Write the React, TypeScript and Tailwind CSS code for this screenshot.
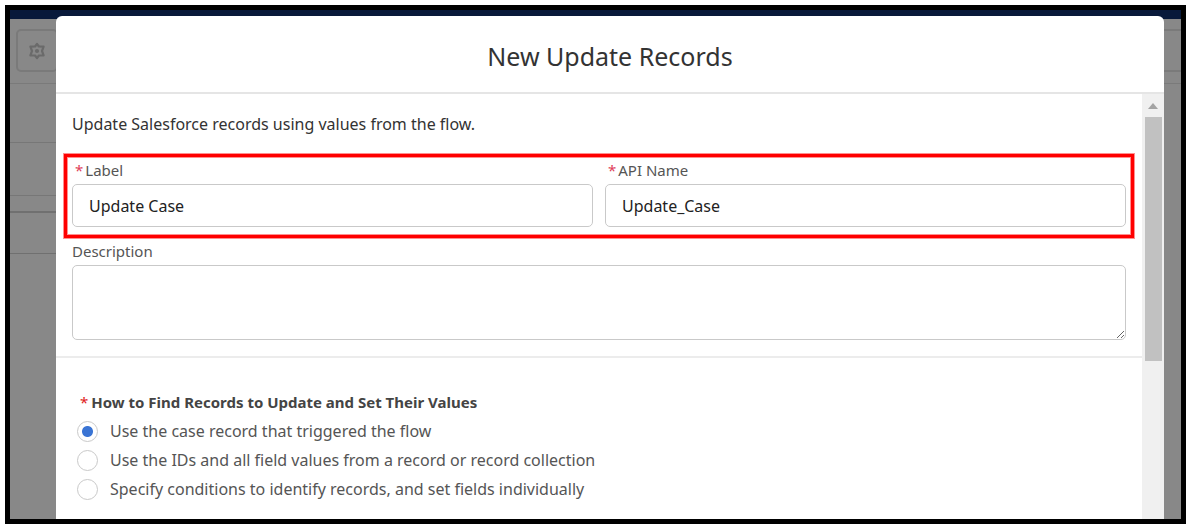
import { useState } from "react";

const findOptions = [
  "Use the case record that triggered the flow",
  "Use the IDs and all field values from a record or record collection",
  "Specify conditions to identify records, and set fields individually",
];

function GearIcon() {
  return (
    <svg viewBox="0 0 18 18" className="size-[18px]" fill="none" stroke="#6a6a6a" strokeWidth="2.2" strokeLinejoin="round" aria-hidden="true">
      <path d="M9 1.8 L10.9 4.5 L15.6 4.6 L14 9 L15.6 13.4 L10.9 13.5 L9 16.2 L7.1 13.5 L2.4 13.4 L4 9 L2.4 4.6 L7.1 4.5 Z" />
      <circle cx="9" cy="9" r="2.1" fill="#6a6a6a" stroke="none" />
    </svg>
  );
}

function PageBehind() {
  return (
    <div className="col-start-1 row-start-1 flex flex-col bg-[#888]">
      <div className="h-[9px] bg-[#08193a]" />
      <div className="flex h-[65px] justify-between border-b border-[#7a7a7a] pt-[10px] pl-[6px]">
        <button type="button" aria-label="Settings" className="flex h-[43px] w-[42px] items-center justify-center rounded-[5px] border-2 border-[#7a7a7a]">
          <GearIcon />
        </button>
        <div className="h-[43px] w-10 border-y-2 border-[#7a7a7a]" />
      </div>
      <div className="w-16">
        <div className="h-[59px] border-b border-[#777]" />
        <div className="h-[53px] border-b border-[#777]" />
        <div className="h-[17px] border-b-2 border-[#707070]" />
        <div className="h-[41px] border-b border-[#707070]" />
      </div>
    </div>
  );
}

function TextField({ id, label, initial }: { id: string; label: string; initial: string }) {
  return (
    <div className="min-w-0 flex-1">
      <label htmlFor={id} className="block pl-[3px] text-[15px] leading-5 text-[#555]">
        <span className="mr-[2px] text-[#e0405a]">*</span>
        {label}
      </label>
      <input
        id={id}
        defaultValue={initial}
        className="mt-1 block h-[43px] w-full rounded-[5px] border border-[#c9c9c9] bg-white px-4 text-base text-[#222] outline-none"
      />
    </div>
  );
}

function ScrollTrack() {
  return (
    <div className="flex w-[22px] shrink-0 flex-col items-center bg-[#f0f0f0]" aria-hidden="true">
      <div className="flex h-[23px] items-center">
        <svg viewBox="0 0 10 6" className="h-[6px] w-[10px]" fill="#a3a3a3">
          <path d="M0 6 L5 0 L10 6 Z" />
        </svg>
      </div>
      <div className="h-[244px] w-[17px] bg-[#c1c1c1]" />
    </div>
  );
}

export default function App() {
  const [choice, setChoice] = useState(0);

  return (
    <div className="flex min-h-screen bg-white pt-[5px] pr-[3px] pb-[5px] pl-[5px] font-['Noto_Sans','Open_Sans',sans-serif]">
      <div className="grid flex-1 grid-cols-1 border-[5px] border-black">
        <PageBehind />
        <section
          role="dialog"
          aria-labelledby="dialog-title"
          className="relative col-start-1 row-start-1 mt-[6px] mr-[17px] ml-[46px] flex flex-col overflow-hidden rounded-t-[6px] bg-white"
        >
          <header className="flex h-[78px] items-center justify-center border-b-2 border-[#e5e5e5] pt-1">
            <h1 id="dialog-title" className="text-[25px] leading-8 text-[#333]">New Update Records</h1>
          </header>
          <div className="flex flex-1">
            <div className="min-w-0 flex-1">
              <div className="border-b-2 border-[#ececec] px-4 pt-[18px] pb-4">
                <p className="text-base leading-6 text-[#333]">Update Salesforce records using values from the flow.</p>
                <div className="-mx-2 mt-[18px] flex gap-3 border-[3px] border-[#f00] px-[5px] pt-[3px] pb-[8px] shadow-[0_0_0_1px_#ff8f8f,inset_0_0_0_1px_#ff8f8f]">
                  <TextField id="label" label="Label" initial="Update Case" />
                  <TextField id="api-name" label="API Name" initial="Update_Case" />
                </div>
                <label htmlFor="description" className="mt-[3px] block text-[15px] leading-5 text-[#555]">Description</label>
                <textarea id="description" className="mt-1 block h-[75px] w-full rounded-[5px] border border-[#c9c9c9] bg-white p-2 text-base outline-none" />
              </div>
              <div className="px-[21px] pt-8 pb-2">
                <fieldset>
                  <legend className="pl-[3px] text-[15px] leading-6 font-bold text-[#444]">
                    <span className="mr-[3px] font-normal text-[#e02020]">*</span>
                    How to Find Records to Update and Set Their Values
                  </legend>
                  <div className="flex flex-col gap-2 pt-[7px]">
                    {findOptions.map((option, index) => (
                      <label key={option} className="flex items-center gap-3 text-base leading-[21px] text-[#555]">
                        <input
                          type="radio"
                          name="find-records"
                          checked={choice === index}
                          onChange={() => setChoice(index)}
                          className="size-[21px] shrink-0 appearance-none rounded-full border border-[#c9c9c9] bg-white checked:bg-[radial-gradient(circle,#3a74d4_5px,#fff_6px)]"
                        />
                        {option}
                      </label>
                    ))}
                  </div>
                </fieldset>
              </div>
            </div>
            <ScrollTrack />
          </div>
        </section>
      </div>
    </div>
  );
}
